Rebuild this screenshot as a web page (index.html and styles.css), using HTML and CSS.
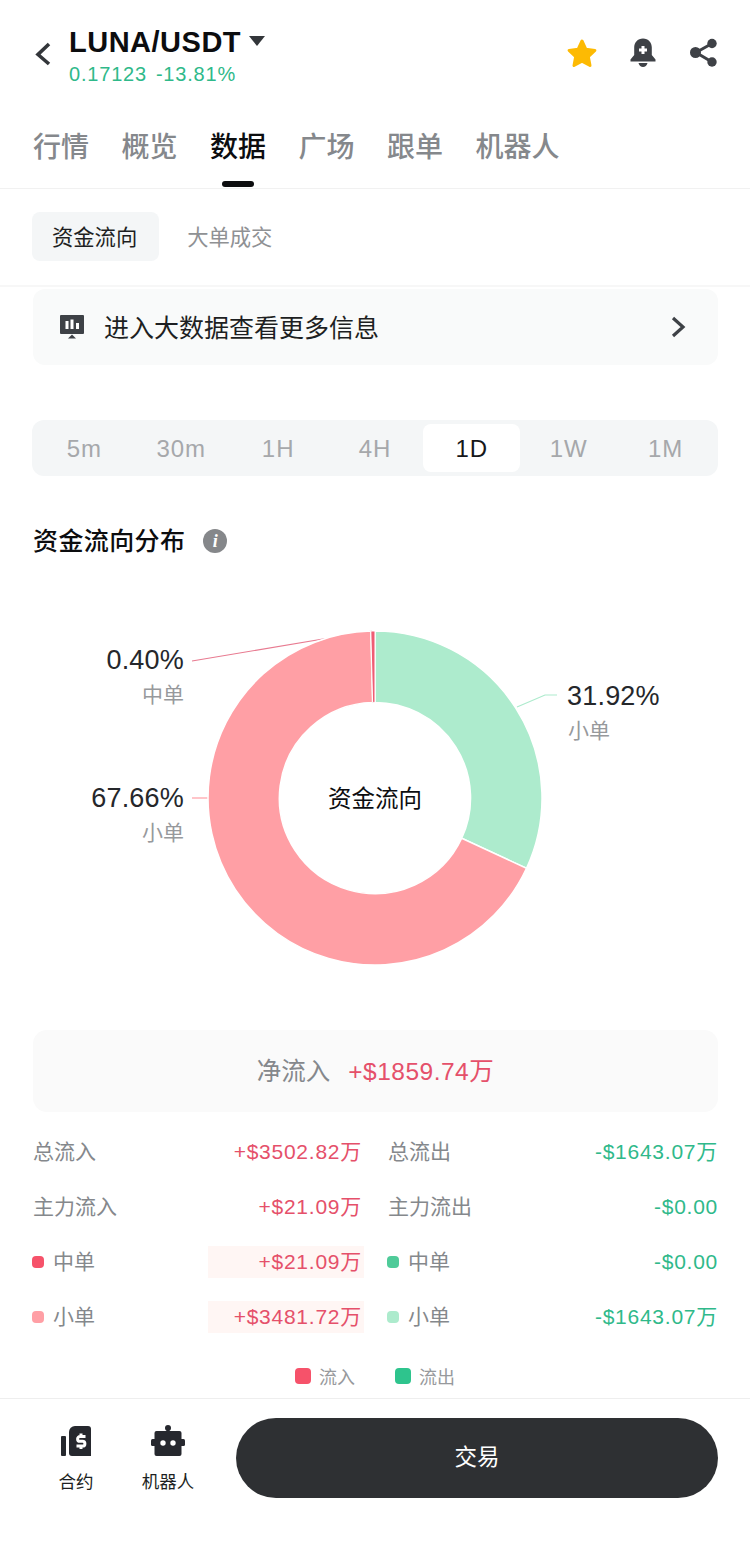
FILE: index.html
```html
<!DOCTYPE html>
<html lang="zh">
<head>
<meta charset="utf-8">
<title>LUNA/USDT</title>
<link rel="stylesheet" href="styles.css">
</head>
<body>
<div class="page">
  <header class="top">
    <svg class="back" width="16" height="24" viewBox="0 0 16 24"><polyline points="14,2 3,12.5 14,22" /></svg>
    <div class="pair">
      <div class="pair-name"><span>LUNA/USDT</span><i class="caret"></i></div>
      <div class="pair-price"><span>0.17123</span><span>-13.81%</span></div>
    </div>
    <div class="top-icons">
      <svg width="32" height="30" viewBox="0 0 32 30"><path class="star" d="M16 3l3.9 8.3 9 1.1-6.6 6.2 1.7 8.9L16 23.2 8 27.5l1.7-8.9-6.6-6.2 9-1.1z"/></svg>
      <svg width="26" height="30" viewBox="0 0 26 30"><path class="ink" d="M13 0.5c-5.4 0-8.8 4-8.8 9v7.5L0.5 21.500v2h25v-2l-3.700-4.500V9.500c0-5-3.400-9-8.800-9z"/><path class="ink" d="M8.500 25h9c-0.600 2.600-2.400 4-4.500 4s-3.900-1.400-4.500-4z"/><path class="plus" d="M13 8v8M9 12h8"/></svg>
      <svg width="30" height="30" viewBox="-1 0 30 30"><path class="share-line" d="M23 5.500 7 14.500 23 24"/><circle class="ink" cx="23" cy="5.500" r="4.700"/><circle class="ink" cx="23" cy="24" r="4.700"/><circle class="ink" cx="6.500" cy="14.500" r="5.500"/></svg>
    </div>
  </header>

  <nav class="tabs">
    <div class="tab">行情</div>
    <div class="tab">概览</div>
    <div class="tab active">数据<i class="tab-bar"></i></div>
    <div class="tab">广场</div>
    <div class="tab">跟单</div>
    <div class="tab">机器人</div>
  </nav>

  <div class="subtabs">
    <div class="subtab on">资金流向</div>
    <div class="subtab">大单成交</div>
  </div>

  <div class="banner">
    <svg width="24" height="24" viewBox="0 0 24 24"><path class="ink" d="M1 0h22a1 1 0 0 1 1 1v17a1 1 0 0 1-1 1H1a1 1 0 0 1-1-1V1a1 1 0 0 1 1-1z"/><path class="bars" d="M7 6v8M12 4.500v9.500M17.500 8v6"/><path class="ink" d="M12 19.500l4 4H8z"/></svg>
    <span class="banner-text">进入大数据查看更多信息</span>
    <svg class="more" width="16" height="22" viewBox="0 0 16 22"><polyline points="3,2 13,11 3,20"/></svg>
  </div>

  <div class="periods">
    <div class="period">5m</div>
    <div class="period">30m</div>
    <div class="period">1H</div>
    <div class="period">4H</div>
    <div class="period on">1D</div>
    <div class="period">1W</div>
    <div class="period">1M</div>
  </div>

  <div class="section-title"><span>资金流向分布</span><i class="info">i</i></div>

  <svg class="chart" width="750" height="400" viewBox="0 0 750 400">
    <polyline class="lead-red" points="192,61 323,39 372,31"/>
    <polyline class="lead-green" points="517,107 545,95 557,95"/>
    <polyline class="lead-pink" points="192,198 210,198"/>
    <path class="seg-green" d="M375 31A167 167 0 0 1 526.500 268.300L461.700 238.200A95.600 95.600 0 0 0 375 102.400Z"/>
    <path class="seg-pink" d="M526.500 268.300A167 167 0 1 1 370.800 31.050L372.600 102.430A95.600 95.600 0 1 0 461.700 238.200Z"/>
    <path class="seg-red" d="M370.800 31.050A167 167 0 0 1 375 31L375 102.400A95.600 95.600 0 0 0 372.600 102.430Z"/>
    <text class="pct end" x="184" y="69">0.40%</text>
    <text class="kind end" x="184" y="102">中单</text>
    <text class="pct" x="567" y="105">31.92%</text>
    <text class="kind" x="568" y="138">小单</text>
    <text class="pct end" x="184" y="207">67.66%</text>
    <text class="kind end" x="184" y="240">小单</text>
    <text class="center" x="375" y="207">资金流向</text>
  </svg>

  <div class="net"><span class="net-label">净流入</span><span class="net-value">+$1859.74万</span></div>

  <div class="stats">
    <div class="row"><span class="label">总流入</span><span class="val up">+$3502.82万</span></div>
    <div class="row"><span class="label">总流出</span><span class="val down">-$1643.07万</span></div>
    <div class="row"><span class="label">主力流入</span><span class="val up">+$21.09万</span></div>
    <div class="row"><span class="label">主力流出</span><span class="val down">-$0.00</span></div>
    <div class="row"><span class="label"><i class="dot c-red"></i>中单</span><span class="val up hl">+$21.09万</span></div>
    <div class="row"><span class="label"><i class="dot c-green"></i>中单</span><span class="val down">-$0.00</span></div>
    <div class="row"><span class="label"><i class="dot c-pink"></i>小单</span><span class="val up hl">+$3481.72万</span></div>
    <div class="row"><span class="label"><i class="dot c-mint"></i>小单</span><span class="val down">-$1643.07万</span></div>
  </div>

  <div class="legend">
    <div class="legend-item"><i class="swatch c-red"></i>流入</div>
    <div class="legend-item"><i class="swatch c-teal"></i>流出</div>
  </div>

  <footer class="foot">
    <div class="foot-item">
      <svg width="32" height="32" viewBox="-1 -1 32 32"><rect class="dark" x="0" y="10" width="5" height="20" rx="1"/><path class="dark" d="M14 0h13a3 3 0 0 1 3 3v27H11a3 3 0 0 1-3-3V6a6 6 0 0 1 6-6z"/><path class="dollar" d="M24.500 10.500h-5.500a2.300 2.300 0 0 0 0 4.800h2.500a2.300 2.300 0 0 1 0 4.800h-6M20 7.500v3M20 20v3"/></svg>
      <span>合约</span>
    </div>
    <div class="foot-item">
      <svg width="34" height="32" viewBox="0 0 34 32"><circle class="dark" cx="17" cy="3" r="3"/><rect class="dark" x="15.500" y="4" width="3" height="4"/><rect class="dark" x="3.500" y="6" width="27" height="25" rx="2"/><rect class="dark" x="0" y="14" width="34" height="7" rx="1.500"/><circle class="eye" cx="12" cy="18" r="2.700"/><circle class="eye" cx="22" cy="18" r="2.700"/></svg>
      <span>机器人</span>
    </div>
    <div class="trade">交易</div>
  </footer>
</div>
</body>
</html>
```
FILE: styles.css
```css
* { box-sizing: border-box; }
html, body { margin: 0; padding: 0; background: #fff; }
body { font-family: "Liberation Sans", "Noto Sans CJK SC", sans-serif; }
i { font-style: normal; display: block; }
svg { display: block; }
.page { width: 750px; height: 1551px; overflow: hidden; }

.top { display: flex; height: 107px; padding: 27px 32px 0 35px; }
.back { margin-top: 15px; fill: none; }
.back polyline { fill: none; stroke: #33363a; stroke-width: 3.6; }
.pair { margin-left: 18px; }
.pair-name { display: flex; align-items: center; font-size: 29px; line-height: 30px; font-weight: 700; color: #0c0d0f; letter-spacing: 0.5px; }
.caret { width: 0; height: 0; margin-left: 8px; margin-top: -2px; border-left: 8px solid transparent; border-right: 8px solid transparent; border-top: 10px solid #33363a; }
.pair-price { display: flex; gap: 9px; margin-top: 5px; font-size: 20px; line-height: 24px; letter-spacing: 0.8px; color: #2fb98a; }
.top-icons { display: flex; align-items: flex-start; gap: 32px; margin-left: auto; margin-top: 11px; }
.star { fill: #fdba03; stroke: #fdba03; stroke-width: 3; stroke-linejoin: round; }
.ink { fill: #3e4146; }
.plus { fill: none; stroke: #fff; stroke-width: 3; }
.share-line { fill: none; stroke: #3e4146; stroke-width: 3; }

.tabs { display: flex; gap: 32.500px; height: 82px; padding: 25px 0 0 33px; border-bottom: 1px solid #f1f1f1; }
.tab { display: flex; flex-direction: column; align-items: center; font-size: 28px; line-height: 32px; font-weight: 500; color: #85888c; }
.tab.active { color: #0c0d0f; }
.tab-bar { width: 32px; height: 6px; margin-top: 17px; border-radius: 3px; background: #0c0d0f; }

.subtabs { display: flex; height: 98px; padding: 23px 32px 0; border-bottom: 2px solid #f7f7f7; }
.subtab { height: 49px; padding: 0 22px 0 20px; margin-right: 8px; font-size: 21.300px; line-height: 53px; border-radius: 8px; color: #8f9194; }
.subtab.on { background: #f4f6f7; color: #1d1f22; }

.banner { display: flex; align-items: center; height: 76px; margin: 2px 32px 0 33px; padding: 0 32px 0 27px; border-radius: 12px; background: #f9fafa; }
.banner-text { margin-left: 20px; padding-bottom: 2px; font-size: 25px; color: #1d1f22; }
.more { margin-left: auto; }
.more polyline { fill: none; stroke: #3e4146; stroke-width: 3.2; }
.bars { fill: none; stroke: #fff; stroke-width: 3; }

.periods { display: grid; grid-template-columns: repeat(7, 1fr); height: 56px; margin: 55px 32px 0; padding: 4px; border-radius: 12px; background: #f4f6f7; }
.period { font-size: 24px; line-height: 50px; height: 48px; text-align: center; border-radius: 8px; letter-spacing: 1px; color: #a6a8ab; }
.period.on { background: #fff; color: #15171a; }

.section-title { display: flex; align-items: center; height: 36px; margin: 47px 0 0 33px; font-size: 25px; font-weight: 500; color: #0c0d0f; letter-spacing: 0.4px; }
.section-title span { padding-bottom: 4px; }
.info { width: 24px; height: 24px; margin-left: 18px; border-radius: 50%; background: #85878a; color: #fff; font: italic 700 18px/24px "Liberation Serif", serif; text-align: center; }

.chart { margin-top: 41px; }
.seg-green { fill: #adebcd; stroke: #fff; stroke-width: 1.5; }
.seg-pink { fill: #ff9fa5; stroke: #fff; stroke-width: 1.5; }
.seg-red { fill: #ef5c74; stroke: #fff; stroke-width: 1; }
.lead-red { fill: none; stroke: #e87a90; stroke-width: 1.2; }
.lead-green { fill: none; stroke: #adebcd; stroke-width: 1.2; }
.lead-pink { fill: none; stroke: #ff9fa5; stroke-width: 1.2; }
.pct { font-size: 27px; letter-spacing: 0.2px; fill: #25272b; }
.kind { font-size: 21px; fill: #97999c; }
.end { text-anchor: end; }
.center { font-size: 23.500px; fill: #0c0d0f; text-anchor: middle; }

.net { display: flex; justify-content: center; align-items: center; gap: 18px; height: 82px; margin: 30px 32px 0 33px; padding-bottom: 3px; border-radius: 14px; background: #fafafa; font-size: 24.500px; }
.net-label { color: #85888c; }
.net-value { color: #e5506a; letter-spacing: 0.5px; }

.stats { display: grid; grid-template-columns: 329px 330px; column-gap: 26px; grid-auto-rows: 55px; margin: 12px 32px 0 33px; }
.row { display: flex; align-items: center; justify-content: space-between; font-size: 21px; line-height: 28px; }
.label { display: flex; align-items: center; color: #85888c; }
.dot { width: 12px; height: 12px; margin-right: 9px; margin-left: -1px; border-radius: 4px; }
.val { letter-spacing: 0.75px; }
.up { color: #e5506a; }
.down { color: #2fb98a; }
.hl { display: block; width: 156px; height: 32px; margin-right: -2px; padding-right: 2px; line-height: 32px; text-align: right; background: #fff6f4; }
.c-red { background: #f6526a; }
.c-pink { background: #ff9fa5; }
.c-green { background: #4fcb99; }
.c-mint { background: #adebcd; }
.c-teal { background: #2ec48d; }

.legend { display: flex; justify-content: center; gap: 40px; height: 16px; margin-top: 24px; }
.legend-item { display: flex; align-items: center; gap: 8px; font-size: 18px; color: #97999c; }
.swatch { width: 16px; height: 16px; border-radius: 4px; }

.foot { display: flex; align-items: flex-start; height: 153px; margin-top: 14px; padding: 19px 32px 0 30px; border-top: 1px solid #eeeeee; }
.foot-item { display: flex; flex-direction: column; align-items: center; width: 92px; padding-top: 7px; font-size: 17.500px; line-height: 20px; color: #1d1f22; }
.foot-item span { margin-top: 15px; }
.dark { fill: #26282e; }
.eye { fill: #fff; }
.dollar { fill: none; stroke: #fff; stroke-width: 3; }
.trade { width: 482px; height: 80px; margin-left: 22px; border-radius: 40px; background: #2e3033; color: #fff; font-size: 22.500px; line-height: 80px; text-align: center; }
```
